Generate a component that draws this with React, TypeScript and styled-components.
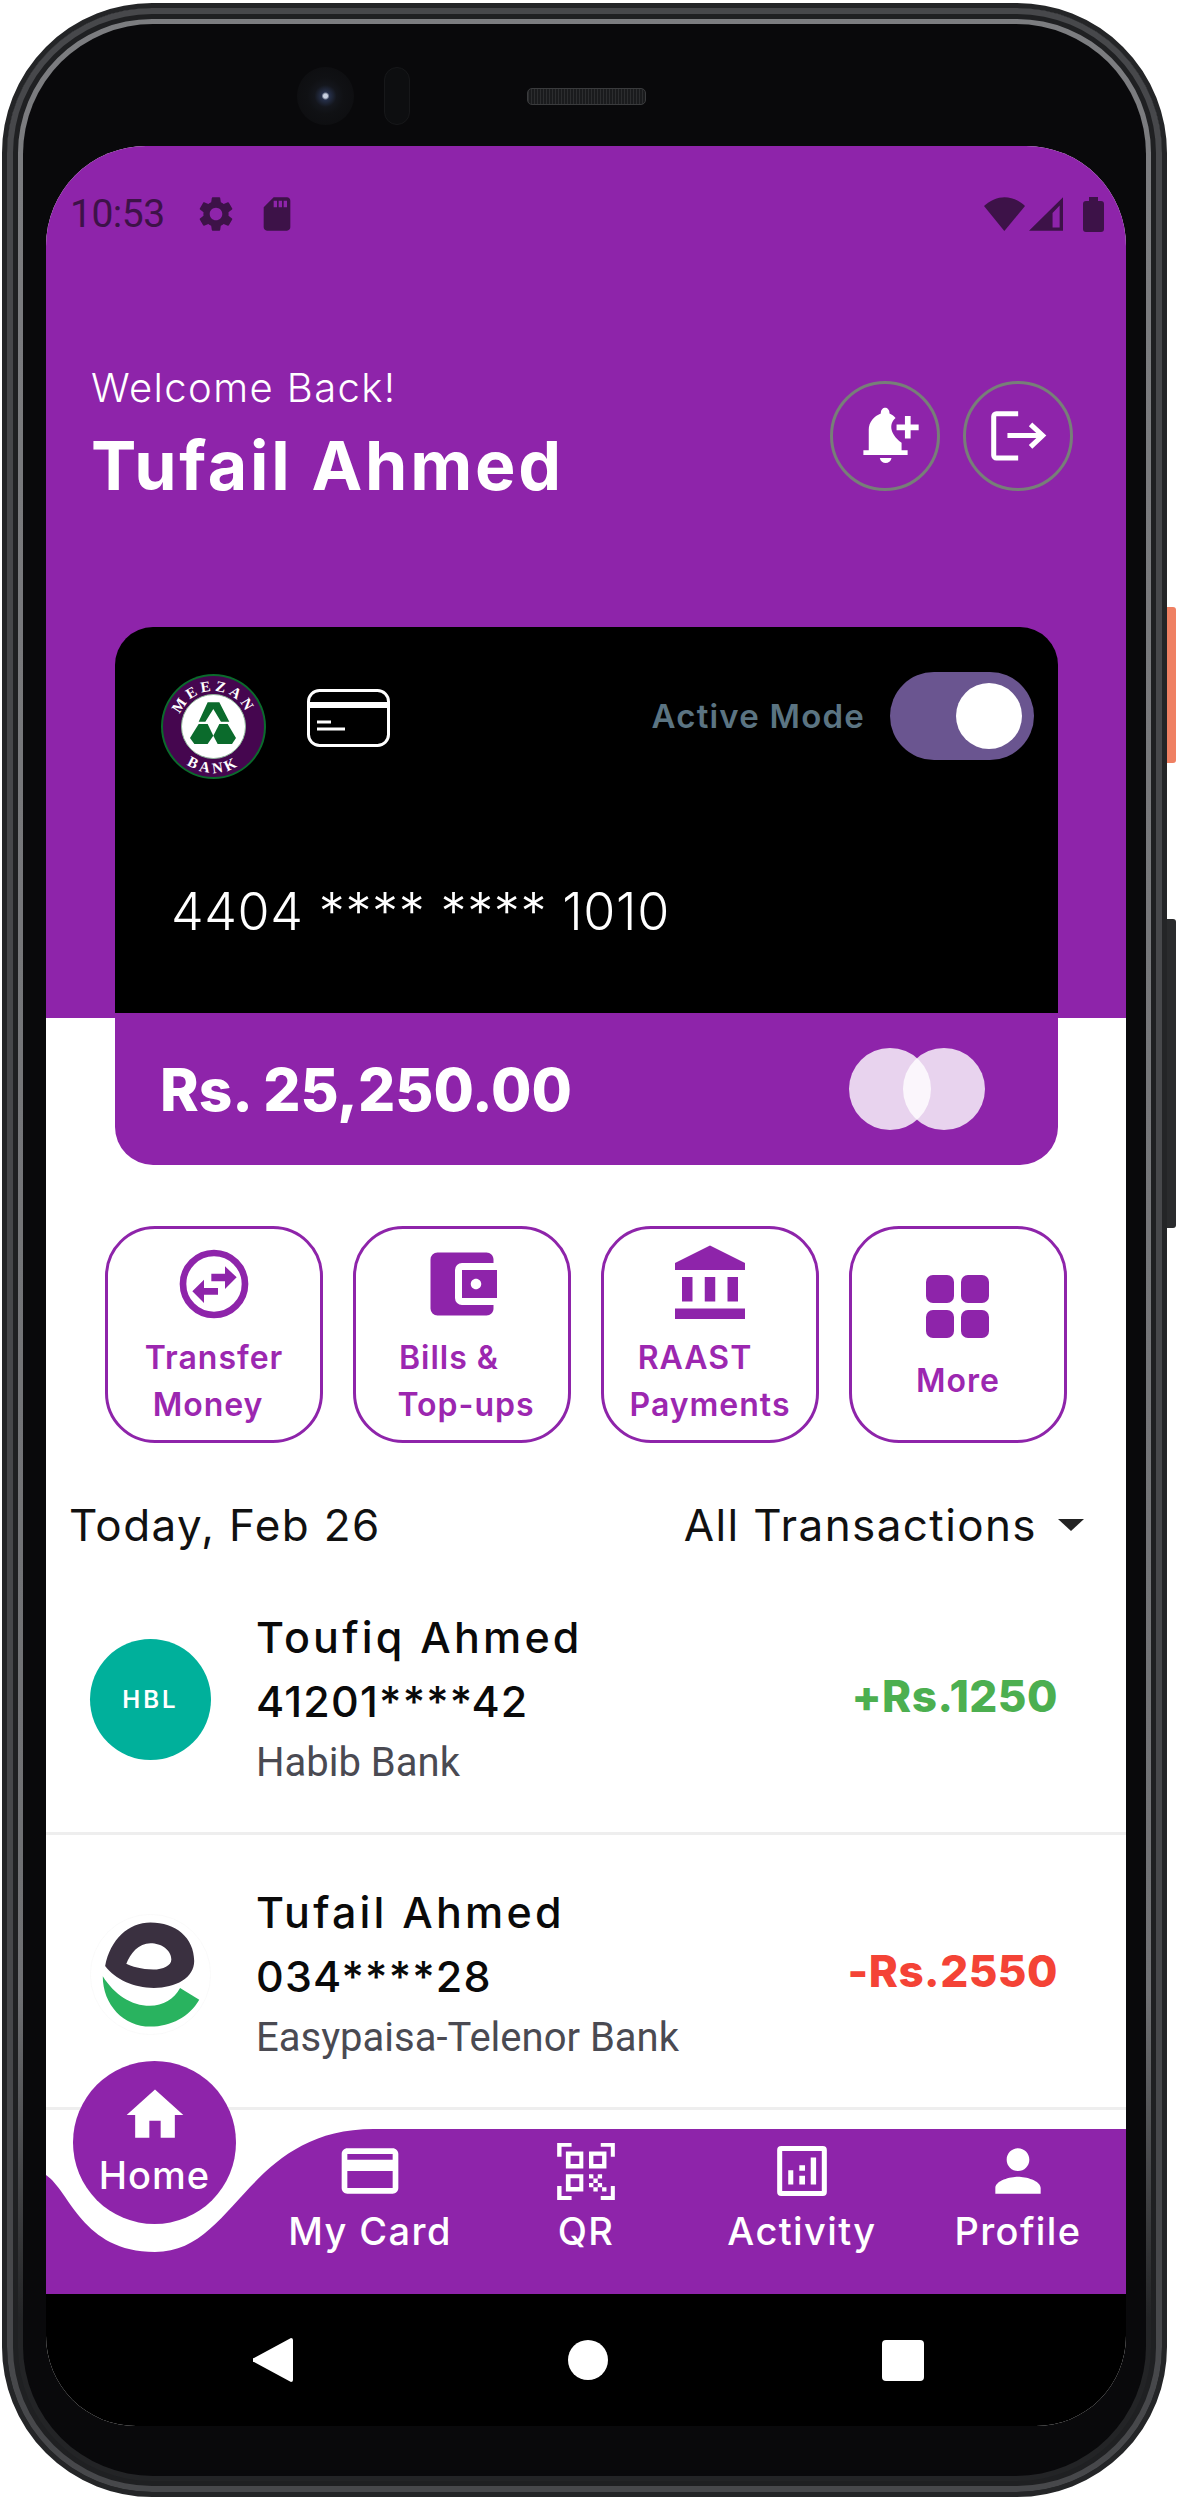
import React, { FC, ReactNode } from "react";
import styled, { createGlobalStyle } from "styled-components";
import {
  MdAccountBalance,
  MdAccountBalanceWallet,
  MdCreditCard,
  MdHome,
  MdPerson,
  MdSdCard,
  MdSettings,
} from "react-icons/md";

const PURPLE = "#8e24aa";
const UI_FONT = `"Inter", "Noto Sans", sans-serif`;
const SYSTEM_FONT = `"Roboto", "Liberation Sans", sans-serif`;

const GlobalStyle = createGlobalStyle`
  html, body {
    margin: 0;
    padding: 0;
    background: #fff;
  }
  * {
    box-sizing: border-box;
  }
`;

// Phone shell
const Page = styled.div`
  width: 1178px;
  height: 2498px;
  padding: 3px 0 0 2px;
  overflow: hidden;
`;

const Phone = styled.div`
  position: relative;
  width: 1165px;
  height: 2494px;
  padding: 16px;
  background: linear-gradient(180deg, #7c7d80 0%, #6f7073 80%, #232426 93%);
  border: 5px solid #242527;
  border-radius: 150px;
  box-shadow:
    inset 0 0 0 6px #47484b,
    inset 0 0 0 11px #1f2022;
`;

const Bezel = styled.div`
  height: 100%;
  padding-left: 23px;
  background: #09090b;
  border-radius: 130px;
`;

const SideButton = styled.div<{ $top: number; $height: number; $color: string }>`
  position: absolute;
  top: ${(p) => p.$top}px;
  right: -14px;
  width: 9px;
  height: ${(p) => p.$height}px;
  background: ${(p) => p.$color};
  border-radius: 0 3px 3px 0;
`;

const TopBezel = styled.div`
  display: flex;
  align-items: center;
  height: 122px;
  padding: 22px 0 0 251px;
`;

const Camera = styled.div`
  width: 57px;
  height: 58px;
  border-radius: 50%;
  background: radial-gradient(circle at 50% 50%, #c8d0e0 0 2px, #26304a 4px, #14161c 11px, #101114 18px, #0c0c0e 100%);
`;

const Sensor = styled.div`
  width: 26px;
  height: 58px;
  margin-left: 30px;
  border: 1px solid #17181a;
  border-radius: 13px;
  background: #0d0e10;
`;

const Speaker = styled.div`
  width: 119px;
  height: 17px;
  margin-left: 117px;
  border: 1px solid #3a3b3d;
  border-radius: 5px;
  background: repeating-linear-gradient(90deg, #2c2d2f 0 1px, #1a1b1d 1px 3px);
`;

const Screen = styled.div`
  display: flex;
  flex-direction: column;
  width: 1080px;
  height: 2280px;
  overflow: hidden;
  background: #fff;
  border-radius: 100px 100px 90px 90px;
`;

// Purple header
const Header = styled.header`
  flex: none;
  height: 872px;
  background: ${PURPLE};
`;

const StatusBar = styled.div`
  display: flex;
  align-items: center;
  height: 36px;
  margin-top: 50px;
  padding: 0 22px 0 24px;
  color: #3d1248;
`;

const StatusTime = styled.span`
  width: 125px;
  font: 400 39px ${SYSTEM_FONT};
  letter-spacing: -0.5px;
`;

const StatusSpacer = styled.div`
  flex: 1;
`;

const StatusIconSlot = styled.span<{ $gap: number }>`
  display: flex;
  margin-left: ${(p) => p.$gap}px;
`;

const GreetingRow = styled.div`
  display: flex;
  justify-content: space-between;
  align-items: center;
  margin-top: 131px;
  padding: 0 53px 0 45px;
`;

const Welcome = styled.div`
  color: #fff;
  font: 300 40px/50px ${UI_FONT};
  letter-spacing: 1.4px;
`;

const UserName = styled.div`
  margin-top: 10px;
  color: #fff;
  font: 700 68px/84px ${UI_FONT};
  letter-spacing: 2.8px;
`;

const HeaderActions = styled.div`
  display: flex;
  gap: 23px;
  margin-top: 1px;
`;

const RoundAction = styled.div`
  display: flex;
  align-items: center;
  justify-content: center;
  width: 110px;
  height: 110px;
  border: 3px solid #777f78;
  border-radius: 50%;
`;

// Bank card
const Card = styled.section`
  flex: none;
  width: 943px;
  height: 538px;
  margin: -391px 0 0 69px;
  overflow: hidden;
  border-radius: 38px;
`;

const CardFace = styled.div`
  height: 386px;
  padding: 45px 24px 0 46px;
  background: #000;
`;

const CardTop = styled.div`
  display: flex;
  align-items: flex-start;
`;

const LogoMark = styled.div`
  margin-top: 2px;
`;

const CardGlyph = styled.div`
  margin: 17px 0 0 41px;
`;

const ModeGroup = styled.div`
  display: flex;
  align-items: center;
  gap: 25px;
  margin: 0 0 0 auto;
`;

const ModeLabel = styled.span`
  color: #5b7482;
  font: 600 33px ${UI_FONT};
  letter-spacing: 1.2px;
`;

const Toggle = styled.div`
  display: flex;
  align-items: center;
  justify-content: flex-end;
  width: 144px;
  height: 88px;
  padding-right: 12px;
  background: #6a5590;
  border-radius: 44px;
`;

const ToggleThumb = styled.div`
  width: 66px;
  height: 66px;
  background: #fff;
  border-radius: 50%;
`;

const CardNumber = styled.div`
  margin: 103px 0 0 10px;
  color: #fff;
  font: 300 52px/60px ${UI_FONT};
  letter-spacing: 0.6px;
`;

const BalanceBar = styled.div`
  display: flex;
  align-items: center;
  justify-content: space-between;
  height: 152px;
  padding: 0 73px 0 45px;
  background: ${PURPLE};
`;

const Balance = styled.div`
  color: #fff;
  font: 800 58.5px ${UI_FONT};
`;

const BrandMark = styled.div`
  display: flex;
`;

const BrandDisc = styled.div<{ $overlap?: boolean }>`
  width: 82px;
  height: 82px;
  margin-left: ${(p) => (p.$overlap ? "-28px" : "0")};
  background: rgba(255, 255, 255, 0.8);
  border-radius: 50%;
`;

// Quick actions
const ActionGrid = styled.div`
  display: flex;
  flex: none;
  gap: 30px;
  margin: 61px 0 0 59px;
`;

const ActionButton = styled.div<{ $pad: number }>`
  display: flex;
  flex-direction: column;
  align-items: center;
  width: 218px;
  height: 217px;
  padding-top: ${(p) => p.$pad}px;
  border: 3px solid ${PURPLE};
  border-radius: 50px;
`;

const ActionIcon = styled.div`
  display: flex;
  align-items: center;
  justify-content: center;
  height: 76px;
  color: ${PURPLE};
`;

const ActionLines = styled.div`
  margin-top: 12px;
  color: #9c27b0;
  font: 600 32px/47px ${UI_FONT};
  letter-spacing: 1px;
  text-align: center;
`;

const ActionLine = styled.div<{ $shift?: number }>`
  transform: translateX(${(p) => p.$shift ?? 0}px);
`;

// Transactions
const DateRow = styled.div`
  display: flex;
  flex: none;
  align-items: center;
  justify-content: space-between;
  height: 70px;
  margin-top: 47px;
  padding: 0 42px 0 23px;
  color: #111;
  font: 400 44px ${UI_FONT};
  letter-spacing: 1.4px;
`;

const FilterGroup = styled.div`
  display: flex;
  align-items: center;
  gap: 21px;
`;

const Caret = styled.span`
  width: 0;
  height: 0;
  border-style: solid;
  border-width: 12px 13px 0;
  border-color: #222 transparent transparent;
`;

const Row = styled.div`
  display: flex;
  flex: none;
  align-items: center;
  padding: 45px 68px 39px 44px;
  border-bottom: 3px solid #eeeeee;
`;

const BankBadge = styled.div`
  display: flex;
  flex: none;
  align-items: center;
  justify-content: center;
  width: 121px;
  height: 121px;
  color: #fff;
  background: #00b09b;
  border-radius: 50%;
  font: 600 24px ${UI_FONT};
  letter-spacing: 3px;
`;

const LogoSlot = styled.div`
  flex: none;
  width: 121px;
  height: 121px;
`;

const RowText = styled.div`
  flex: 1;
  margin-left: 45px;
`;

const RowLine = styled.div<{ $spacing: number }>`
  color: #0a0a0a;
  font: 500 43px/64px ${UI_FONT};
  letter-spacing: ${(p) => p.$spacing}px;
`;

const BankName = styled.div`
  color: #4a4a52;
  font: 400 40px/60px ${SYSTEM_FONT};
`;

const Amount = styled.div<{ $color: string }>`
  margin-bottom: 6px;
  color: ${(p) => p.$color};
  font: 800 44px ${UI_FONT};
  letter-spacing: 0.5px;
`;

// Bottom navigation
const Nav = styled.nav`
  position: relative;
  flex: none;
  height: 165px;
  margin-top: 19px;
`;

const NavShape = styled.svg`
  position: absolute;
  top: 0;
  left: 0;
`;

const NavItems = styled.div`
  position: relative;
  display: flex;
  padding: 10px 0 0 216px;
`;

const NavItem = styled.div`
  display: flex;
  flex-direction: column;
  align-items: center;
  width: 216px;
  color: #fff;
`;

const NavIcon = styled.div`
  display: flex;
  align-items: center;
  justify-content: center;
  height: 64px;
`;

const NavLabel = styled.div`
  margin-top: 6px;
  font: 500 38px/44px ${UI_FONT};
  letter-spacing: 1.4px;
`;

const HomeBubble = styled.div`
  position: absolute;
  top: -68px;
  left: 27px;
  display: flex;
  flex-direction: column;
  align-items: center;
  width: 163px;
  height: 163px;
  padding-top: 20px;
  color: #fff;
  background: ${PURPLE};
  border-radius: 50%;
  font: 500 38px/44px ${UI_FONT};
  letter-spacing: 1px;
`;

const HomeLabel = styled.span`
  margin-top: 4px;
`;

const SystemBar = styled.div`
  display: flex;
  flex: none;
  align-items: center;
  justify-content: space-between;
  height: 132px;
  padding: 0 202px 0 207px;
  background: #000;
`;

const BackKey = styled.svg`
  display: block;
`;

const HomeKey = styled.div`
  width: 40px;
  height: 40px;
  background: #fff;
  border-radius: 50%;
`;

const RecentKey = styled.div`
  width: 42px;
  height: 41px;
  background: #fff;
  border-radius: 4px;
`;

// Drawings
const WifiIcon: FC = () => (
  <svg width="41" height="34" viewBox="72 33 123 102">
    <path d="M133 135 72 60c38-35 86-35 123 0z" fill="currentColor" />
  </svg>
);

const SignalIcon: FC = () => (
  <svg width="34" height="34" viewBox="207 35 101 100">
    <path d="M207 135 308 35v100zM277 125h21V60l-21 22z" fillRule="evenodd" fill="currentColor" />
  </svg>
);

const BatteryIcon: FC = () => (
  <svg width="21" height="35" viewBox="0 0 21 35">
    <path d="M6 0h9v4h3a3 3 0 0 1 3 3v25a3 3 0 0 1-3 3H3a3 3 0 0 1-3-3V7a3 3 0 0 1 3-3h3z" fill="currentColor" />
  </svg>
);

const BellPlusIcon: FC = () => (
  <svg width="67" height="67" viewBox="92 88 200 200" fill="#fff">
    <path d="M178 122c0-22 26-22 26 0 8 4 14 8 18 14-17 14-22 44 18 74v22h18v14H126v-14h16v-62c0-22 16-40 36-48z" />
    <path d="M175 255h35c-3 20-32 20-35 0z" />
    <path d="M250 130h17v25h24v17h-24v25h-17v-25h-25v-17h25z" />
  </svg>
);

const LogoutIcon: FC = () => (
  <svg width="67" height="67" viewBox="488 88 200 200" fill="none" stroke="#fff" strokeWidth="15">
    <path d="M587 123h-65a8 8 0 0 0-8 8v116a8 8 0 0 0 8 8h65" />
    <path d="M555 188h105M624 155l36 33-36 34" />
  </svg>
);

const CardOutlineIcon: FC = () => (
  <svg width="83" height="58" viewBox="0 0 83 58" fill="none" stroke="#fff">
    <rect x="1.5" y="1.5" width="80" height="55" rx="11" strokeWidth="3" />
    <path d="M1 16h81" strokeWidth="6" />
    <path d="M10 33h14M10 40h28" strokeWidth="3" />
  </svg>
);

const MeezanLogo: FC = () => (
  <svg width="105" height="105" viewBox="0 0 105 105" style={{ display: "block" }}>
    <defs>
      <path id="meezan-top" d="M17 52.5a35.500 35.500 0 0 1 71 0" />
      <path id="meezan-bottom" d="M6 52.500a46.500 46.500 0 0 0 93 0" />
    </defs>
    <circle cx="52.5" cy="52.5" r="52.5" fill="#0b6b2c" />
    <circle cx="52.5" cy="52.5" r="50.500" fill="#45064f" />
    <circle cx="52.5" cy="52.5" r="32" fill="#fff" stroke="#8fb89a" strokeWidth="1" />
    <text fontFamily="Liberation Serif, serif" fontWeight="700" fontSize="15" fill="#fff" letterSpacing="3.500">
      <textPath href="#meezan-top" startOffset="50%" textAnchor="middle">MEEZAN</textPath>
    </text>
    <text fontFamily="Liberation Serif, serif" fontWeight="700" fontSize="15" fill="#fff" letterSpacing="3.500">
      <textPath href="#meezan-bottom" startOffset="50%" textAnchor="middle">BANK</textPath>
    </text>
    <g transform="scale(.3333) translate(-65 -40)" fill="#0b6b2c">
      <path d="M205 125h35l30 58h-25l-23-38-24 38h-20z" />
      <path d="M178 190h27l17 35-17 25h-40l-13-18z" />
      <path d="M240 190h25l25 42-12 18h-43l-13-25z" />
    </g>
  </svg>
);

const EasypaisaLogo: FC = () => (
  <svg width="121" height="121" viewBox="90 35 360 360">
    <circle cx="270" cy="215" r="179" fill="#fff" stroke="#f7f7f7" strokeWidth="2" />
    <path
      fillRule="evenodd"
      fill="#3a3040"
      d="M135 190C150 110 205 60 270 60c75 0 130 45 130 115 0 50-55 80-120 80-60 0-115-25-145-65zM198 183c15 8 45 17 80 17 30 0 54-12 54-30 0-28-30-48-62-48-35 0-60 30-72 61z"
    />
    <path
      fill="#29b35f"
      d="M128 220c35 55 85 88 140 88 40 0 72-20 90-53l57 35c-28 50-85 80-145 80-80 0-142-65-142-150z"
    />
  </svg>
);

const TransferIcon: FC = () => (
  <svg width="70" height="70" viewBox="55 28 210 210" fill={PURPLE}>
    <circle cx="160" cy="133" r="93" fill="none" stroke={PURPLE} strokeWidth="20" />
    <path d="M152 102h41V80l35 33-35 35v-23h-41z" />
    <path d="M172 145h-42v-25l-35 35 35 35v-25h42z" />
  </svg>
);

const AppsIcon: FC = () => (
  <svg width="64" height="64" viewBox="0 0 64 64" fill={PURPLE}>
    <rect width="28" height="28" rx="7" />
    <rect x="35" width="28" height="28" rx="7" />
    <rect y="35" width="28" height="28" rx="7" />
    <rect x="35" y="35" width="28" height="28" rx="7" />
  </svg>
);

const QrIcon: FC = () => (
  <svg width="58" height="57" viewBox="52 37 172 170" fill="#fff">
    <path d="M52 37h43v11H65v30H52zM182 37h42v41h-12V48h-30zM52 165h13v30h30v12H52zM212 165h12v42h-42v-12h30z" />
    <path
      fillRule="evenodd"
      d="M78 62h52v51H78zM92 75v25h26V75zM147 62h52v51h-52zM160 75v25h26V75zM78 130h52v52H78zM92 142v26h26v-26z"
    />
    <path d="M147 130h13v13h-13zM173 130h13v13h-13zM160 143h13v13h-13zM147 156h13v13h-13zM173 156h13v13h-13zM160 169h13v13h-13zM186 169h13v13h-13z" />
  </svg>
);

const ActivityIcon: FC = () => (
  <svg width="50" height="50" viewBox="712 48 148 149" fill="#fff">
    <path
      fillRule="evenodd"
      d="M724 48h124a12 12 0 0 1 12 12v125a12 12 0 0 1-12 12H724a12 12 0 0 1-12-12V60a12 12 0 0 1 12-12zM727 63v119h118V63z"
    />
    <path d="M745 120h15v43h-15zM778 105h17v17h-17zM778 137h17v26h-17zM812 82h16v81h-16z" />
  </svg>
);

// Data
interface IAction {
  lines: { text: string; shift?: number }[];
  icon: ReactNode;
  pad: number;
}

const ACTIONS: IAction[] = [
  {
    lines: [{ text: "Transfer" }, { text: "Money", shift: -6 }],
    icon: <TransferIcon />,
    pad: 17,
  },
  {
    lines: [{ text: "Bills &", shift: -13 }, { text: "Top-ups", shift: 4 }],
    icon: <MdAccountBalanceWallet size={84} />,
    pad: 17,
  },
  {
    lines: [{ text: "RAAST", shift: -15 }, { text: "Payments" }],
    icon: <MdAccountBalance size={84} />,
    pad: 17,
  },
  {
    lines: [{ text: "More" }],
    icon: <AppsIcon />,
    pad: 40,
  },
];

interface ITransaction {
  name: string;
  account: string;
  bank: string;
  amount: string;
  color: string;
  logo: ReactNode;
}

const TRANSACTIONS: ITransaction[] = [
  {
    name: "Toufiq Ahmed",
    account: "41201****42",
    bank: "Habib Bank",
    amount: "+Rs.1250",
    color: "#4caf50",
    logo: <BankBadge>HBL</BankBadge>,
  },
  {
    name: "Tufail Ahmed",
    account: "034****28",
    bank: "Easypaisa-Telenor Bank",
    amount: "-Rs.2550",
    color: "#f44336",
    logo: (
      <LogoSlot>
        <EasypaisaLogo />
      </LogoSlot>
    ),
  },
];

const NAV_ITEMS: { label: string; icon: ReactNode }[] = [
  { label: "My Card", icon: <MdCreditCard size={68} /> },
  { label: "QR", icon: <QrIcon /> },
  { label: "Activity", icon: <ActivityIcon /> },
  { label: "Profile", icon: <MdPerson size={68} /> },
];

const App: FC = () => {
  return (
    <Page>
      <GlobalStyle />
      <Phone>
        <SideButton $top={599} $height={156} $color="#ef8063" />
        <SideButton $top={911} $height={309} $color="#2a2b2d" />
        <Bezel>
          <TopBezel>
            <Camera />
            <Sensor />
            <Speaker />
          </TopBezel>
          <Screen>
            <Header>
              <StatusBar>
                <StatusTime>10:53</StatusTime>
                <MdSettings size={42} />
                <StatusIconSlot $gap={20}>
                  <MdSdCard size={40} />
                </StatusIconSlot>
                <StatusSpacer />
                <WifiIcon />
                <StatusIconSlot $gap={4}>
                  <SignalIcon />
                </StatusIconSlot>
                <StatusIconSlot $gap={20}>
                  <BatteryIcon />
                </StatusIconSlot>
              </StatusBar>
              <GreetingRow>
                <div>
                  <Welcome>Welcome Back!</Welcome>
                  <UserName>Tufail Ahmed</UserName>
                </div>
                <HeaderActions>
                  <RoundAction>
                    <BellPlusIcon />
                  </RoundAction>
                  <RoundAction>
                    <LogoutIcon />
                  </RoundAction>
                </HeaderActions>
              </GreetingRow>
            </Header>

            <Card>
              <CardFace>
                <CardTop>
                  <LogoMark>
                    <MeezanLogo />
                  </LogoMark>
                  <CardGlyph>
                    <CardOutlineIcon />
                  </CardGlyph>
                  <ModeGroup>
                    <ModeLabel>Active Mode</ModeLabel>
                    <Toggle>
                      <ToggleThumb />
                    </Toggle>
                  </ModeGroup>
                </CardTop>
                <CardNumber>4404 **** **** 1010</CardNumber>
              </CardFace>
              <BalanceBar>
                <Balance>Rs. 25,250.00</Balance>
                <BrandMark>
                  <BrandDisc />
                  <BrandDisc $overlap />
                </BrandMark>
              </BalanceBar>
            </Card>

            <ActionGrid>
              {ACTIONS.map((action) => (
                <ActionButton key={action.lines[0].text} $pad={action.pad}>
                  <ActionIcon>{action.icon}</ActionIcon>
                  <ActionLines>
                    {action.lines.map((line) => (
                      <ActionLine key={line.text} $shift={line.shift}>
                        {line.text}
                      </ActionLine>
                    ))}
                  </ActionLines>
                </ActionButton>
              ))}
            </ActionGrid>

            <DateRow>
              <span>Today, Feb 26</span>
              <FilterGroup>
                <span>All Transactions</span>
                <Caret />
              </FilterGroup>
            </DateRow>

            {TRANSACTIONS.map((tx) => (
              <Row key={tx.name}>
                {tx.logo}
                <RowText>
                  <RowLine $spacing={3.2}>{tx.name}</RowLine>
                  <RowLine $spacing={1.2}>{tx.account}</RowLine>
                  <BankName>{tx.bank}</BankName>
                </RowText>
                <Amount $color={tx.color}>{tx.amount}</Amount>
              </Row>
            ))}

            <Nav>
              <NavShape width="1080" height="165" viewBox="0 0 1080 165">
                <path
                  d="M0 46C24 62 36 123 109 123C190 123 200 0 328 0H1080V165H0Z"
                  fill={PURPLE}
                />
              </NavShape>
              <HomeBubble>
                <MdHome size={68} />
                <HomeLabel>Home</HomeLabel>
              </HomeBubble>
              <NavItems>
                {NAV_ITEMS.map((item) => (
                  <NavItem key={item.label}>
                    <NavIcon>{item.icon}</NavIcon>
                    <NavLabel>{item.label}</NavLabel>
                  </NavItem>
                ))}
              </NavItems>
            </Nav>

            <SystemBar>
              <BackKey width="40" height="44" viewBox="0 0 40 44">
                <path d="M38 0a2 2 0 0 1 2 2v40a2 2 0 0 1-2 2L1 24a2 2 0 0 1 0-4z" fill="#fff" />
              </BackKey>
              <HomeKey />
              <RecentKey />
            </SystemBar>
          </Screen>
        </Bezel>
      </Phone>
    </Page>
  );
};

export default App;
